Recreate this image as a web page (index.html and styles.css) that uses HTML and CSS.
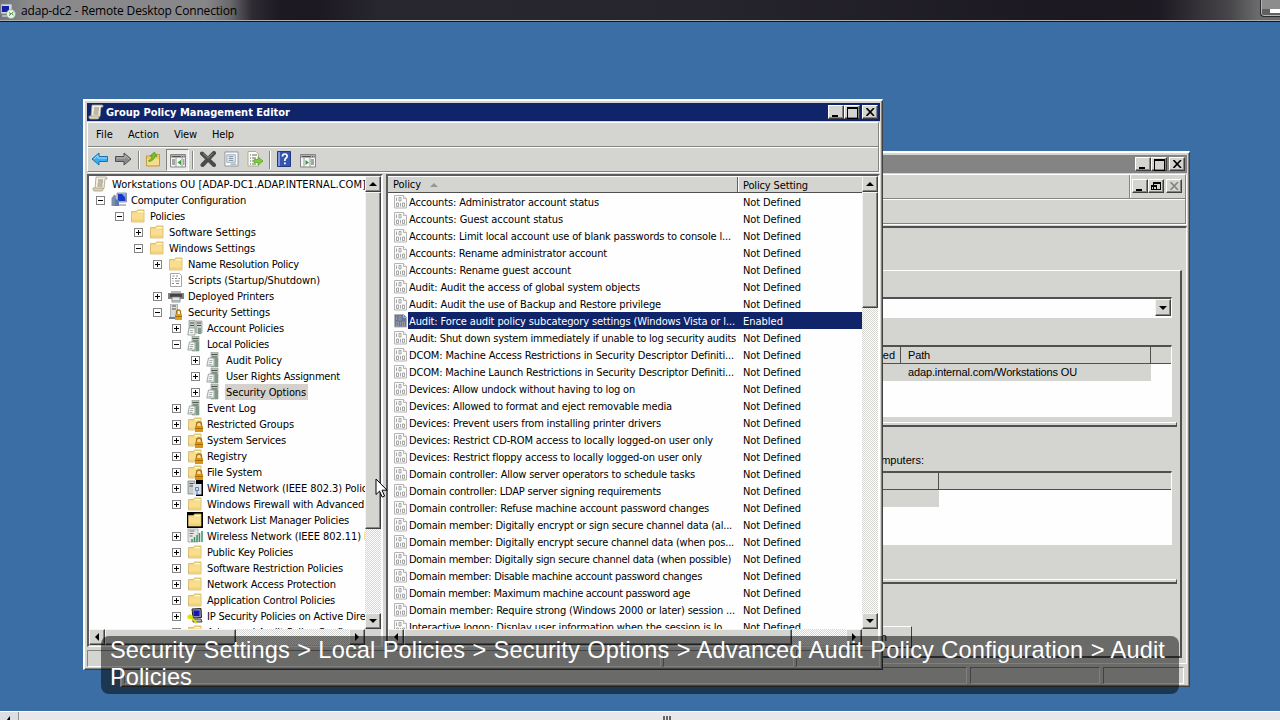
FILE: index.html
```html
<!doctype html>
<html lang="en">
<head>
    <meta charset="UTF-8">
    <title>adap-dc2 - Remote Desktop Connection</title>
    <link rel="stylesheet" href="styles.css">
</head>
<body>

<!-- shared icons -->
<svg class="defs" width="0" height="0">
    <symbol id="i-scroll" viewBox="0 0 16 16">
        <path d="M4 1h10q1.500 0 1 2h-2l-1 9.500H3z" fill="#f6f0dc" stroke="#a39d8a" stroke-width=".8"/>
        <path d="M1 12h10v1.500q0 1.500-1.500 1.500H2q-1.500-1-1-3z" fill="#ddd3b4" stroke="#a39d8a" stroke-width=".8"/>
        <path d="M6 4h5M6 6h5M5.500 8h5M5.500 10h5" stroke="#77736a" stroke-width=".9"/>
    </symbol>
    <symbol id="i-computer" viewBox="0 0 16 16">
        <path d="M6 1h9.500v9H6z" fill="#c9ccd6" stroke="#777c8c" stroke-width=".8"/>
        <path d="M7 2h7.500v7H7z" fill="#1a36c8"/><path d="M11 2h3.500v4z" fill="#7fa5ff"/>
        <path d="M8 12h7v2H8z" fill="#b9bcc4"/>
        <path d="M.5 6l3-3.500L5 4v10H.5z" fill="#7d8fae"/><path d="M4 7l4 1v6H4z" fill="#5d7cb3"/>
    </symbol>
    <symbol id="i-folder" viewBox="0 0 16 16">
        <path d="M1.500 14V3.500h5l1-1.500h6.500v12z" fill="#f5d67c" stroke="#d2b468" stroke-width=".8"/>
        <path d="M8 3h5.500v1.500H7z" fill="#fff6d4"/>
        <path d="M2 5.500h11.500v8H2z" fill="#f9de90"/><path d="M2 11.500h11.500v2H2z" fill="#f2d07a"/>
    </symbol>
    <symbol id="i-lockfolder" viewBox="0 0 16 16">
        <use href="#i-folder"/>
        <path d="M9.500 10V8.500a2.500 2.500 0 0 1 5 0V10" fill="none" stroke="#a7761c" stroke-width="1.300"/>
        <path d="M8 10h8v6H8z" fill="#d9941a"/><path d="M8 12h8v1H8z" fill="#a86c0c"/>
    </symbol>
    <symbol id="i-blackfolder" viewBox="0 0 16 16">
        <path d="M0 0h16v16H0z"/><use href="#i-folder"/>
    </symbol>
    <symbol id="i-script" viewBox="0 0 16 16">
        <path d="M2.500 1.500h9l2 2v11h-11z" fill="#fff" stroke="#a5a5a5"/>
        <path d="M4.500 4h2M8 4h2M4 6.500h1.500M7 6.500h2M10.500 6.500H12M4.500 9h1M7 9h4.500M4 11.500h2M8 11.500h3" stroke="#858585"/>
    </symbol>
    <symbol id="i-printer" viewBox="0 0 16 16">
        <path d="M3 3h10v4H3z" fill="#b7b7b7"/><path d="M0 5h16v6H0z" fill="#808080"/>
        <path d="M2 6h12v3H2z" fill="#444"/><path d="M4 9h8v5H4z" fill="#e4e4e4" stroke="#777" stroke-width=".8"/>
        <path d="M5 12h6v1H5z" fill="#9db4bf"/>
    </symbol>
    <symbol id="i-seclock" viewBox="0 0 16 16">
        <path d="M2.500 0h7v14h-7z" fill="#dadada" stroke="#999" stroke-width=".7"/>
        <path d="M4 2h4M4 5h4" stroke="#555"/><path d="M1 13h8v2H1z" fill="#6f8190"/>
        <path d="M8.500 10V8a2 2 0 0 1 4 0v2" fill="none" stroke="#a7761c" stroke-width="1.300"/>
        <path d="M7 10h7v6H7z" fill="#dba023"/><path d="M7 12h7v1H7z" fill="#a86c0c"/>
    </symbol>
    <symbol id="i-server" viewBox="0 0 16 16">
        <path d="M5 0h7v15H5z" fill="#b9c4bd" stroke="#8b948e" stroke-width=".6"/>
        <path d="M5.500 2.500h6M6 5h5" stroke="#4c5550"/>
        <path d="M9 6h3v9H9z" fill="#7d9a86"/>
        <path d="M2.500 6H8v8H.8z" fill="#f4f6f4" stroke="#8a948c" stroke-width=".8"/>
        <path d="M3.500 8.500h3M3 10.500h3M2.500 12.500h3" stroke="#8fa094" stroke-width=".8"/>
    </symbol>
    <symbol id="i-servers" viewBox="0 0 16 16">
        <path d="M2 0h6v12H2zM9 1h6v12H9z" fill="#c8cfca" stroke="#89938c" stroke-width=".7"/>
        <path d="M3 3h4M10 3h4M3 5.500h4M10 5.500h4" stroke="#4c5550"/>
        <path d="M2 8h6v7H.8z" fill="#f4f6f4" stroke="#8a948c" stroke-width=".8"/>
        <path d="M11 8h3v6h-3z" fill="#7d9a86"/><path d="M3 10.500h3M3 12.500h3" stroke="#8fa094" stroke-width=".8"/>
    </symbol>
    <symbol id="i-wired" viewBox="0 0 16 16">
        <path d="M9 0h7v16H9z"/>
        <path d="M1 1h7v13H1z" fill="#c8cfca" stroke="#777" stroke-width=".7"/>
        <path d="M2.500 3.500h4M2.500 6h4" stroke="#555"/>
        <path d="M6 4h8.500v10.500H6z" fill="#d8e0ea"/>
        <path d="M8.500 7.500h3v3h-3zM10 10.500V15" fill="none" stroke="#5a7faf"/>
    </symbol>
    <symbol id="i-wireless" viewBox="0 0 16 16">
        <path d="M1 1h10v13H1z" fill="#e4e8e4" stroke="#999" stroke-width=".7"/>
        <path d="M2.500 3h5M2.500 5.500h4M2.500 8h3" stroke="#666" stroke-width=".9"/>
        <path d="M5 14v-3M7.500 14V9M10 14V7M12.500 14V5M15 14V3" stroke="#3b9362" stroke-width="1.500"/>
    </symbol>
    <symbol id="i-ipsec" viewBox="0 0 16 16">
        <path d="M5 1l9-.5.500 9L6 10z" fill="#8f93a8" stroke="#222"/><path d="M6.500 2.500h6v5.500h-6z" fill="#1616b4"/>
        <path d="M6 11h8l1 3H6z" fill="#bbb" stroke="#222" stroke-width=".8"/>
        <path d="M0 8l3-2 3 2-2 3H1z" fill="#e3e800"/>
        <path d="M3.500 8.500L9.500 15" stroke="#d9de00" stroke-width="2"/>
    </symbol>
    <symbol id="i-policy" viewBox="0 0 16 16">
        <path class="paper" d="M2.500 1.500h9l3 3v9.500h-12z"/>
        <path class="paper" d="M11.500 1.500v3h3"/>
        <path d="M4.500 3.500v3.500M7 3.500h2V7H7zM4.500 9h2v3.500h-2zM8.500 9v3.500M10.500 9h2v3.500h-2z" fill="none" stroke="#9b9b9b" stroke-width=".9"/>
    </symbol>
    <symbol id="i-rdp" viewBox="0 0 16 16">
        <path d="M1 1h11v10H1z" fill="#d4d7df" stroke="#838894" stroke-width=".8"/><path d="M2 3h7v6H2z" fill="#1422a4"/>
        <path d="M2 12h7v2H2z" fill="#b3b5ba"/><circle cx="11" cy="11" r="4.500" fill="#e7f3e5" stroke="#83a783" stroke-width=".7"/>
        <path d="M9 9.500l2 1.500-2 1.500M13.500 9l-2 1.500 2 1.500" fill="none" stroke="#3c853c"/>
    </symbol>
</svg>

<div class="rdp-title">
    <svg class="icon"><use href="#i-rdp"/></svg>
    <span class="fit" data-w="216">adap-dc2 - Remote Desktop Connection</span>
    <div class="rdp-min"></div>
</div>

<!-- Group Policy Management console, behind the editor -->
<div class="window console">
    <div class="caption inactive">
        <div class="capbtns">
            <button class="cb min"></button><button class="cb max"></button><button class="cb close"><svg viewBox="0 0 9 8"><path d="M.5 0l7.500 8M8 0L.5 8"/></svg></button>
        </div>
    </div>
    <div class="bars">
        <div class="menubar">
            <div class="mdi">
                <button class="cb min"></button><button class="cb restore"><i></i></button><button class="cb close off"><svg viewBox="0 0 9 8"><path d="M.5 0l7.500 8M8 0L.5 8"/></svg></button>
            </div>
        </div>
        <div class="toolbar"></div>
    </div>
    <div class="view">
        <div class="page">
            <div class="combo"><span class="sb-btn"><i class="down"></i></span></div>
            <div class="links">
                <div class="lhead"><span class="c1">Link Enabled</span><span class="c2"><b class="fit" data-w="22">Path</b></span><span class="c3"></span></div>
                <div class="lrow"><b class="fit" data-w="169">adap.internal.com/Workstations OU</b></div>
            </div>
            <div class="rule"></div>
            <div class="label">groups, users, and computers:</div>
            <div class="filter">
                <div class="lhead"><span class="f1"></span><span class="c3"></span></div>
                <div class="frow"></div>
            </div>
            <div class="rule second"></div>
            <div class="pagebtn">Open</div>
        </div>
    </div>
    <div class="status"><span class="s1"></span><span class="s2"></span><span class="s3"></span></div>
</div>

<!-- Editor -->
<div class="window editor">
    <div class="caption">
        <svg class="icon"><use href="#i-scroll"/></svg>
        <span class="fit" data-w="184">Group Policy Management Editor</span>
        <div class="capbtns">
            <button class="cb min"></button><button class="cb max"></button><button class="cb close"><svg viewBox="0 0 9 8"><path d="M.5 0l7.500 8M8 0L.5 8"/></svg></button>
        </div>
    </div>
    <div class="bars">
        <div class="menubar">
            <span class="m1"><b class="fit" data-w="17">File</b></span>
            <span class="m2"><b class="fit" data-w="31">Action</b></span>
            <span class="m3"><b class="fit" data-w="23">View</b></span>
            <span class="m4"><b class="fit" data-w="22">Help</b></span>
        </div>
        <div class="toolbar">
            <svg class="tb" viewBox="0 0 18 16"><path d="M1 8l7-6v3.500h8.500v5H8V14z" fill="#39aef0" stroke="#1b6fae"/><path d="M3 8l4-3.500V7h9" fill="none" stroke="#a5defc"/></svg>
            <svg class="tb t-fwd" viewBox="0 0 18 16"><path d="M17 8l-7-6v3.500H1.500v5H10V14z" fill="#8b8b8b" stroke="#505050"/><path d="M2.500 7H11V4.500L15 8" fill="none" stroke="#bbb"/></svg>
            <i class="sep"></i>
            <svg class="tb t-up" viewBox="0 0 16 16"><path d="M1.500 15V5h5l1-1.500h7V15z" fill="#f1cd68" stroke="#c19a40"/><path d="M2 8h12v6H2z" fill="#f8dc8b"/><path d="M3.500 9.500Q7 8.500 7 5H5l4.500-4L12 5.500l-2-.3q-.5 4-6 5.500z" fill="#72c02c" stroke="#498a15" stroke-width=".6"/></svg>
            <span class="pressed"><svg viewBox="0 0 16 14"><path d="M.5.5h15v12.500H.5z" fill="#f6f6f6" stroke="#858585"/><path d="M1 1h14v3H1z" fill="#aeb0b3"/><path d="M2 2.500h9M12 2.500h1M14 2.500h.5" stroke="#555"/><path d="M6 4v9M12 4v9" stroke="#999"/><path d="M2 6h3M2 8h3M2 10h3M13 6h1.500M13 8h1.500M13 10h1.500" stroke="#555"/><path d="M11 6v5L7.500 8.500z" fill="#35a035"/></svg></span>
            <i class="sep"></i>
            <svg class="tb t-del" viewBox="0 0 18 16"><path d="M3 2.500l12 11.500M15 2L3.500 14" stroke="#4b4b4b" stroke-width="4" stroke-linecap="round"/><path d="M4 2.500l5 4.500 5-4.500" fill="none" stroke="#888" stroke-width="1"/></svg>
            <svg class="tb t-prop" viewBox="0 0 16 16"><path d="M1 .5h14v15H1z" fill="#fafafa" stroke="#8f9297"/><path d="M3 3.500h9v8H3z" fill="#e8eef5" stroke="#8ea7c0"/><path d="M5 5.500h5M5 7.500h5M5 9.500h5M7 13.500h6" stroke="#7c8b99"/></svg>
            <svg class="tb t-exp" viewBox="0 0 16 16"><path d="M1 .5h8l2.500 2.500v12H1z" fill="#fcfcf4" stroke="#b2ad8b"/><path d="M3 4h1M5 4h5M3 7h1M5 7h4M3 10h1M5 10h3M3 13h1M5 13h4" stroke="#666"/><path d="M7 8.500h4V6l5 4-5 4v-2.500H7z" fill="#7cce3a" stroke="#4f9c1c" stroke-width=".7"/></svg>
            <i class="sep"></i>
            <svg class="tb t-help" viewBox="0 0 14 16"><path d="M.5.5h13v15H.5z" fill="#3555b5" stroke="#22377c"/><path d="M1 1h2v14H1z" fill="#7f98dd"/><path d="M5.500 5.500q0-2.500 2.300-2.500t2.300 2.200q0 1.300-1.200 2T7.800 10" fill="none" stroke="#fff" stroke-width="1.700"/><path d="M7 11.500h1.800v1.800H7z" fill="#fff"/></svg>
            <svg class="tb t-pane" viewBox="0 0 16 14"><path d="M.5.500h15v12.500H.5z" fill="#f6f6f6" stroke="#858585"/><path d="M1 1h14v3H1z" fill="#aeb0b3"/><path d="M2 2.500h9M12 2.500h1M14 2.500h.5" stroke="#555"/><path d="M4 4v9M10 4v9" stroke="#999"/><path d="M11 6h3M11 8h3M11 10h3" stroke="#555"/><path d="M5.500 6v5L9 8.500z" fill="#35a035"/></svg>
        </div>
    </div>
    <div class="panes">
        <div class="pane tree">
            <div class="client" id="tree"></div>
            <div class="vsb"><span class="sb-btn"><i class="up"></i></span><span class="thumb"></span><span class="sb-btn end"><i class="down"></i></span></div>
            <div class="hsb"><span class="sb-btn"><i class="left"></i></span><span class="thumb"></span><span class="sb-btn end"><i class="right"></i></span></div>
        </div>
        <div class="pane list">
            <div class="client">
                <div class="head"><span class="h1"><b class="fit" data-w="28">Policy</b><i class="sort"></i></span><span class="h2"><b class="fit" data-w="65">Policy Setting</b></span></div>
                <div id="list"></div>
            </div>
            <div class="vsb"><span class="sb-btn"><i class="up"></i></span><span class="thumb"></span><span class="sb-btn end"><i class="down"></i></span></div>
            <div class="hsb"><span class="sb-btn"><i class="left"></i></span><span class="thumb"></span><span class="sb-btn end"><i class="right"></i></span></div>
        </div>
    </div>
    <div class="status"><span class="s1"></span><span class="s2"></span><span class="s3"></span></div>
</div>

<svg class="cursor" viewBox="0 0 13 21"><path d="M1 1v15.500l3.600-3.400 2.600 6 2.400-1-2.600-5.900H12z" fill="#fff" stroke="#000"/></svg>

<div class="subtitle"><span class="fit" data-w="1055">Security Settings &gt; Local Policies &gt; Security Options &gt; Advanced Audit Policy Configuration &gt; Audit</span><br><span class="fit" data-w="82">Policies</span></div>

<div class="rdp-scroll"><span class="arrow"><i class="left"></i></span><span class="grip"></span></div>

<script src="script.js"></script>
</body>
</html>
```
FILE: styles.css
```css
* {
    box-sizing: border-box;
}
body {
    margin: 0;
    width: 1280px;
    height: 720px;
    overflow: hidden;
    position: relative;
    background: #3b6ea5;
    font: 11px/16px "DejaVu Sans Condensed", "DejaVu Sans", sans-serif;
    font-stretch: condensed;
    color: #000;
}
b {
    font-weight: normal;
}
.defs {
    position: absolute;
}
.fit {
    display: inline-block;
    white-space: pre;
}
.icon {
    width: 16px;
    height: 16px;
    flex: none;
}
.paper {
    fill: var(--paper, #fbfbfb);
    stroke: #b4b4b4;
}

/* remote desktop frame */
.rdp-title {
    height: 22px;
    display: flex;
    align-items: center;
    border-bottom: 1px solid #14161c;
    box-shadow: inset 0 -1px #a9adb0;
    background: linear-gradient(90deg, #75767a 0, #8a8a8c 30px, #87878a 205px, #6a696d 230px, #2e2b33 252px, #1d1922 280px, #1b1821 315px, #28262e 380px, #26242c 700px, #1b1821 1080px, #1d1a22 1160px, #48464a 1230px, #6b6b6c 1258px);
    font: 12px/16px "Open Sans", "Noto Sans", sans-serif;
}
.rdp-title .icon {
    margin-right: 5px;
}
.rdp-min {
    width: 22px;
    height: 19px;
    margin: -2px -2px 0 auto;
    align-self: flex-start;
    border: 2px solid #2a282c;
    border-radius: 0 0 0 4px;
    outline: 1px solid #b5b5b7;
    outline-offset: -2px;
    background: linear-gradient(#8c8c8c 60%, #5f5f5f 60%);
}
.rdp-min::after {
    content: "";
    display: block;
    width: 12px;
    height: 4px;
    margin: 9px 0 0 8px;
    background: #fff;
}
.rdp-scroll {
    position: absolute;
    left: 0;
    top: 711px;
    width: 1280px;
    height: 9px;
    overflow: hidden;
    border-top: 1px solid #fff;
    background: #e9e7e9;
}
.rdp-scroll .arrow {
    display: block;
    width: 19px;
    height: 16px;
    padding: 4px 0 0 6px;
    border-right: 1px solid #8d9297;
    background: #dcdfe1;
}
.rdp-scroll .left {
    display: block;
    width: 4px;
    border-width: 5px 4px 5px 0;
}
.rdp-scroll .grip {
    position: absolute;
    left: 663px;
    top: 4px;
    width: 8px;
    height: 5px;
    background: repeating-linear-gradient(90deg, #666 0 2px, #eee 2px 3px);
}

/* windows */
.window {
    position: absolute;
    display: flex;
    flex-direction: column;
    padding: 2px;
    background: #d4d4d0;
    border: 2px solid #fff;
    border-right-color: #404040;
    border-bottom-color: #404040;
    border-right-width: 1px;
    border-bottom-width: 1px;
    box-shadow: inset -1px -1px #848480;
    overflow: hidden;
}
.editor {
    left: 83px;
    top: 99px;
    width: 800px;
    height: 571px;
}
.console {
    left: 120px;
    top: 151px;
    width: 1070px;
    height: 536px;
}
.caption {
    display: flex;
    align-items: center;
    height: 18px;
    flex: none;
    padding: 0 2px 0 1px;
    width: 793px;
    background: #10246a;
    color: #fff;
    font-weight: bold;
}
.caption .icon {
    margin-right: 2px;
}
.caption .fit {
    margin-top: 1px;
}
.caption.inactive {
    background: #848484;
    width: auto;
    margin-right: 0;
}
.capbtns {
    display: flex;
    margin-left: auto;
}
.cb {
    width: 16px;
    height: 14px;
    padding: 0;
    border: 1px solid #fff;
    border-right-color: #404040;
    border-bottom-color: #404040;
    box-shadow: inset -1px -1px #848480;
    background: #d4d4d0;
    display: flex;
}
.cb.min::after {
    content: "";
    width: 6px;
    height: 2px;
    margin: 9px 0 0 3px;
    background: #000;
}
.cb.max::after {
    content: "";
    width: 9px;
    height: 9px;
    margin: 1px 0 0 2px;
    border: 1px solid #000;
    border-top-width: 2px;
}
.cb.close {
    margin-left: 2px;
}
.cb svg {
    width: 9px;
    height: 8px;
    margin: 2px 0 0 3px;
    fill: none;
    stroke: #000;
    stroke-width: 1.6;
}
.cb.off svg {
    stroke: #848484;
}
.cb.restore i {
    position: relative;
    width: 6px;
    height: 5px;
    margin: 5px 0 0 2px;
    border: 1px solid #000;
    border-top-width: 2px;
}
.cb.restore i::before {
    content: "";
    position: absolute;
    left: 1px;
    top: -5px;
    width: 6px;
    height: 5px;
    border: 1px solid #000;
    border-top-width: 2px;
}
.bars {
    flex: none;
    height: 50px;
    margin-top: 1px;
    border: 1px solid #fff;
    border-right-color: #848480;
    border-bottom-color: #848480;
    box-shadow: 1px 1px #fff;
    margin-right: 1px;
}
.menubar {
    display: flex;
    height: 24px;
    border-bottom: 1px solid #848480;
    padding-top: 4px;
}
.editor .menubar {
    padding-left: 8px;
}
.m1 { width: 32px; }
.m2 { width: 46px; }
.m3 { width: 38px; }
.toolbar {
    display: flex;
    align-items: center;
    height: 24px;
    border-top: 1px solid #fff;
    padding-left: 3px;
}
.tb {
    width: 18px;
    height: 16px;
    margin-top: -1px;
}
.t-fwd { margin-left: 5px; }
.t-up { width: 16px; margin-left: 5px; }
.t-del { margin-left: 5px; }
.t-prop { width: 15px; margin-left: 7px; }
.t-exp { width: 16px; margin-left: 8px; }
.t-help { width: 14px; margin-left: 6px; }
.t-pane { width: 16px; height: 14px; margin: 2px 0 0 9px; }
.sep {
    width: 2px;
    height: 18px;
    margin: 0 0 0 6px;
    border-left: 1px solid #848480;
    border-right: 1px solid #fff;
}
.pressed {
    width: 23px;
    height: 22px;
    margin-left: 5px;
    padding: 4px 3px;
    border: 1px solid #848480;
    border-right-color: #fff;
    border-bottom-color: #fff;
    background: #ececea;
}
.pressed svg {
    display: block;
    width: 16px;
    height: 14px;
}
.pressed + .sep { margin-left: 3px; }

/* panes */
.panes {
    display: flex;
    height: 473px;
    flex: none;
    margin-top: 2px;
}
.pane {
    display: grid;
    grid-template: 453px 16px / 1fr 16px;
    border: 2px solid #fff;
    border-top-color: #5c5c5c;
    border-left-color: #5c5c5c;
    border-bottom-width: 1px;
}
.tree {
    width: 296px;
}
.list {
    width: 494px;
    margin-left: 3px;
}
.client {
    background: #fefefe;
    overflow: hidden;
}
.vsb, .hsb {
    display: flex;
    background: repeating-conic-gradient(#fff 0 25%, #d4d4d0 0 50%) 0 0 / 2px 2px;
}
.vsb {
    flex-direction: column;
}
.sb-btn, .thumb {
    flex: none;
    display: flex;
    align-items: center;
    justify-content: center;
    border: 1px solid #f4f4f4;
    border-right-color: #404040;
    border-bottom-color: #404040;
    box-shadow: inset -1px -1px #848480;
    background: #d4d4d0;
}
.sb-btn {
    width: 16px;
    height: 16px;
}
.vsb .end { margin-top: auto; }
.hsb .end { margin-left: auto; }
.tree .vsb .thumb { height: 337px; }
.tree .hsb .thumb { width: 131px; }
.list .vsb .thumb { height: 116px; }
.list .hsb .thumb { width: 388px; }
.up, .down {
    border: 4px solid transparent;
}
.up { border-bottom-color: #000; border-top: 0; }
.down { border-top-color: #000; border-bottom: 0; }
.left, .right {
    border: 4px solid transparent;
}
.left { border-right-color: #000; border-left: 0; }
.right { border-left-color: #000; border-right: 0; }

.node {
    display: flex;
    align-items: center;
    height: 16px;
    white-space: nowrap;
}
.node .box {
    flex: none;
    width: 9px;
    height: 9px;
    margin: 1px 6px 0 0;
    border: 1px solid #848484;
    background: linear-gradient(#000, #000) 1px 3px / 5px 1px no-repeat;
}
.node .plus {
    background: linear-gradient(#000, #000) 1px 3px / 5px 1px no-repeat, linear-gradient(#000, #000) 3px 1px / 1px 5px no-repeat;
}
.node .none {
    visibility: hidden;
}
.node .text {
    height: 16px;
    margin-left: 3px;
    padding: 0 2px 0 1px;
    line-height: 18px;
}
.node.selected .text {
    background: #d4d0cc;
}
.head {
    display: flex;
    height: 17px;
    background: #d4d4d0;
    border-top: 1px solid #fff;
    border-bottom: 1px solid #505050;
    line-height: 17px;
}
.h1 {
    display: flex;
    align-items: center;
    width: 350px;
    padding-left: 5px;
    border-right: 1px solid #606060;
}
.h2 {
    flex: 1;
    padding-left: 4px;
    border-left: 1px solid #fff;
}
.sort {
    margin-left: 9px;
    border: 4px solid transparent;
    border-top: 0;
    border-bottom-color: #969696;
}
.policy {
    display: flex;
    align-items: center;
    height: 17px;
    line-height: 19px;
}
.policy .icon {
    margin-left: 4px;
}
.policy .name {
    width: 335px;
    height: 17px;
    padding-left: 1px;
    white-space: nowrap;
}
.policy .setting {
    flex: 1;
    height: 17px;
}
.policy.selected .name, .policy.selected .setting {
    background: #10246a;
    color: #fff;
}
.policy.selected .icon {
    --paper: #6676a8;
}
.status {
    display: flex;
    flex: 1;
    margin-top: 3px;
    gap: 2px;
}
.status span {
    border: 1px solid #848480;
    border-right-color: #fff;
    border-bottom-color: #fff;
}
.editor .s1 { width: 574px; }
.editor .s2 { width: 131px; }
.editor .s3 { flex: 1; }

/* console content */
.console {
    font-family: "Liberation Sans", sans-serif;
    font-stretch: normal;
}
.console .bars {
    margin-right: 1px;
}
.console .menubar {
    padding: 0;
}
.mdi {
    display: flex;
    width: 56px;
    margin-left: auto;
    padding: 4px 0 0 2px;
    border-left: 1px solid #848480;
    box-shadow: inset 1px 0 #fff;
}
.view {
    flex: none;
    height: 438px;
    margin-top: 2px;
    padding: 42px 4px 6px 0;
    border-top: 2px solid #505050;
    border-right: 1px solid #fff;
    border-bottom: 1px solid #fff;
}
.page {
    height: 388px;
    padding-right: 8px;
    border-top: 1px solid #fff;
    border-right: 2px solid #505050;
    border-bottom: 2px solid #505050;
}
.combo, .links, .filter {
    border: 1px solid #fff;
    border-top: 2px solid #505050;
    background: #fefefe;
}
.combo {
    display: flex;
    justify-content: flex-end;
    height: 21px;
    margin-top: 26px;
}
.combo .sb-btn {
    height: 17px;
}
.links {
    height: 72px;
    margin-top: 27px;
}
.lhead {
    display: flex;
    height: 17px;
    background: #d4d4d0;
    border-bottom: 1px solid #505050;
    line-height: 17px;
}
.c1 {
    width: 776px;
    padding-right: 5px;
    text-align: right;
    border-right: 1px solid #505050;
}
.c2 {
    width: 250px;
    padding-left: 7px;
    border-right: 1px solid #505050;
}
.lrow {
    width: 1026px;
    height: 17px;
    padding-left: 783px;
    line-height: 17px;
    background: #d4d4d0;
}
.rule {
    height: 5px;
    margin: 5px -5px 0 0;
    border-top: 1px solid #fff;
    border-right: 1px solid #505050;
    border-bottom: 2px solid #505050;
}
.label {
    width: 800px;
    height: 16px;
    margin-top: 25px;
    text-align: right;
}
.filter {
    height: 74px;
    margin-top: 3px;
}
.f1 {
    width: 814px;
    border-right: 1px solid #505050;
}
.frow {
    width: 814px;
    height: 17px;
    background: #d4d4d0;
}
.rule.second {
    margin-top: 34px;
}
.pagebtn {
    width: 80px;
    height: 22px;
    margin: 42px 0 0 708px;
    padding-right: 24px;
    line-height: 20px;
    text-align: right;
    border: 1px solid #fff;
    border-right-color: #404040;
    border-bottom-color: #404040;
}
.console .s1 { width: 843px; }
.console .s2 { width: 130px; }
.console .s3 { flex: 1; margin-right: 3px; }
.console .status { gap: 3px; }

.cursor {
    position: absolute;
    left: 375px;
    top: 478px;
    width: 13px;
    height: 21px;
}
.subtitle {
    position: absolute;
    left: 101px;
    top: 636px;
    width: 1078px;
    height: 58px;
    padding: 1px 9px;
    border-radius: 8px;
    background: rgba(0, 0, 0, .5);
    color: #fff;
    font: 23.6px/27px "Liberation Sans", Arial, sans-serif;
    font-stretch: normal;
    word-spacing: .6px;
    white-space: nowrap;
}
```
FILE: script.js
```js
// level, expander, icon, text, width
var nodes = [
    [0, '', 'scroll', 'Workstations OU [ADAP-DC1.ADAP.INTERNAL.COM]', 254],
    [0, '-', 'computer', 'Computer Configuration', 115],
    [1, '-', 'folder', 'Policies', 35],
    [2, '+', 'folder', 'Software Settings', 87],
    [2, '-', 'folder', 'Windows Settings', 86],
    [3, '+', 'folder', 'Name Resolution Policy', 111],
    [3, '', 'script', 'Scripts (Startup/Shutdown)', 132],
    [3, '+', 'printer', 'Deployed Printers', 86],
    [3, '-', 'seclock', 'Security Settings', 82],
    [4, '+', 'servers', 'Account Policies', 77],
    [4, '-', 'server', 'Local Policies', 62],
    [5, '+', 'server', 'Audit Policy', 56],
    [5, '+', 'server', 'User Rights Assignment', 114],
    [5, '+', 'server', 'Security Options', 80],
    [4, '+', 'server', 'Event Log', 49],
    [4, '+', 'lockfolder', 'Restricted Groups', 87],
    [4, '+', 'lockfolder', 'System Services', 79],
    [4, '+', 'lockfolder', 'Registry', 40],
    [4, '+', 'lockfolder', 'File System', 55],
    [4, '+', 'wired', 'Wired Network (IEEE 802.3) Policies', 174],
    [4, '+', 'folder', 'Windows Firewall with Advanced Security', 200],
    [4, '', 'blackfolder', 'Network List Manager Policies', 142],
    [4, '+', 'wireless', 'Wireless Network (IEEE 802.11) Policies', 193],
    [4, '+', 'folder', 'Public Key Policies', 86],
    [4, '+', 'folder', 'Software Restriction Policies', 136],
    [4, '+', 'folder', 'Network Access Protection', 129],
    [4, '+', 'folder', 'Application Control Policies', 128],
    [4, '+', 'ipsec', 'IP Security Policies on Active Directory', 183],
    [4, '+', 'folder', 'Advanced Audit Policy Configuration', 177]
];

// name, width
var policies = [
    ['Accounts: Administrator account status', 190],
    ['Accounts: Guest account status', 154],
    ['Accounts: Limit local account use of blank passwords to console l...', 322],
    ['Accounts: Rename administrator account', 198],
    ['Accounts: Rename guest account', 162],
    ['Audit: Audit the access of global system objects', 231],
    ['Audit: Audit the use of Backup and Restore privilege', 252],
    ['Audit: Force audit policy subcategory settings (Windows Vista or l...', 326],
    ['Audit: Shut down system immediately if unable to log security audits', 327],
    ['DCOM: Machine Access Restrictions in Security Descriptor Definiti...', 325],
    ['DCOM: Machine Launch Restrictions in Security Descriptor Definiti...', 325],
    ['Devices: Allow undock without having to log on', 226],
    ['Devices: Allowed to format and eject removable media', 263],
    ['Devices: Prevent users from installing printer drivers', 252],
    ['Devices: Restrict CD-ROM access to locally logged-on user only', 304],
    ['Devices: Restrict floppy access to locally logged-on user only', 293],
    ['Domain controller: Allow server operators to schedule tasks', 286],
    ['Domain controller: LDAP server signing requirements', 252],
    ['Domain controller: Refuse machine account password changes', 300],
    ['Domain member: Digitally encrypt or sign secure channel data (al...', 323],
    ['Domain member: Digitally encrypt secure channel data (when pos...', 325],
    ['Domain member: Digitally sign secure channel data (when possible)', 322],
    ['Domain member: Disable machine account password changes', 293],
    ['Domain member: Maximum machine account password age', 281],
    ['Domain member: Require strong (Windows 2000 or later) session ...', 326],
    ['Interactive logon: Display user information when the session is lo...', 322]
];

function icon(name) {
    return '<svg class="icon"><use href="#i-' + name + '"/></svg>';
}

var html = '';
nodes.forEach(function (n, i) {
    var box = '<i class="box ' + (n[1] == '+' ? 'plus' : n[1] == '-' ? '' : 'none') + '"></i>';
    var cls = 'node' + (n[3] == 'Security Options' ? ' selected' : '');
    var pad = i == 0 ? 3 : 7 + n[0] * 19;
    html += '<div class="' + cls + '" style="padding-left: ' + pad + 'px">' + (i == 0 ? '' : box) +
        icon(n[2]) + '<span class="text"><span class="fit" data-w="' + n[4] + '">' + n[3] + '</span></span></div>';
});
document.getElementById('tree').innerHTML = html;

html = '';
policies.forEach(function (p, i) {
    var on = i == 7;
    html += '<div class="policy' + (on ? ' selected' : '') + '">' + icon('policy') +
        '<span class="name"><span class="fit" data-w="' + p[1] + '">' + p[0] + '</span></span>' +
        '<span class="setting"><span class="fit" data-w="' + (on ? 40 : 58) + '">' + (on ? 'Enabled' : 'Not Defined') + '</span></span></div>';
});
document.getElementById('list').innerHTML = html;

// spread the letters so that every caption takes its own width
document.querySelectorAll('.fit').forEach(function (el) {
    var w = el.getBoundingClientRect().width;
    el.style.letterSpacing = (el.dataset.w - w) / el.textContent.length + 'px';
});
```
